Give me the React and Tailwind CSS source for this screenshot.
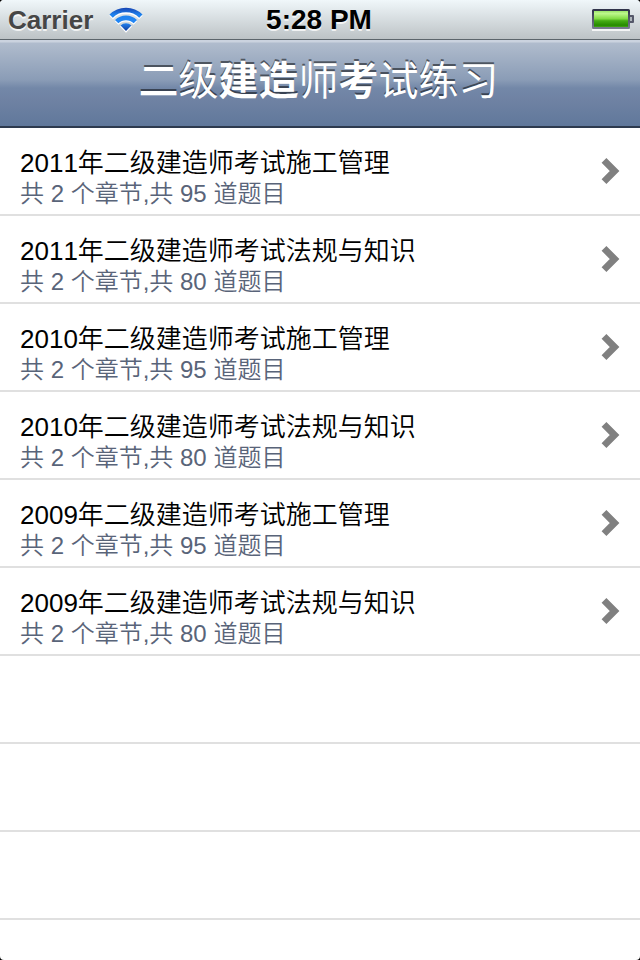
const exams = [
  { id: 1, title: '2011年二级建造师考试施工管理', chapters: 2, questions: 95 },
  { id: 2, title: '2011年二级建造师考试法规与知识', chapters: 2, questions: 80 },
  { id: 3, title: '2010年二级建造师考试施工管理', chapters: 2, questions: 95 },
  { id: 4, title: '2010年二级建造师考试法规与知识', chapters: 2, questions: 80 },
  { id: 5, title: '2009年二级建造师考试施工管理', chapters: 2, questions: 95 },
  { id: 6, title: '2009年二级建造师考试法规与知识', chapters: 2, questions: 80 },
];

function WifiIcon() {
  return (
    <svg className="ml-4 mt-1.5 h-7 w-[34px]" viewBox="0 0 34 28" fill="none">
      <defs>
        <linearGradient id="wifi" x1="0" y1="2" x2="0" y2="25" gradientUnits="userSpaceOnUse">
          <stop offset="0" stopColor="#1746b4" />
          <stop offset="0.3" stopColor="#1e83ee" />
          <stop offset="0.65" stopColor="#2487f5" />
          <stop offset="1" stopColor="#103c9c" />
        </linearGradient>
      </defs>
      <g stroke="#fff" strokeWidth="5">
        <path d="M2.15 11.4a21 21 0 0 1 29.7 0" />
        <path d="M7.67 16.9a13.2 13.2 0 0 1 18.66 0" />
      </g>
      <path d="M11 20.4a8.4 8.4 0 0 1 12 0L17 26.8z" fill="#fff" />
      <g stroke="url(#wifi)" strokeWidth="4.7">
        <path d="M2.15 10.15a21 21 0 0 1 29.7 0" />
        <path d="M7.67 15.67a13.2 13.2 0 0 1 18.66 0" />
      </g>
      <path d="M11.6 19.4a7.6 7.6 0 0 1 10.8 0L17 25z" fill="url(#wifi)" />
    </svg>
  );
}

function BatteryIcon() {
  return (
    <svg className="h-[23px] w-[43px]" viewBox="0 0 43 23">
      <defs>
        <linearGradient id="charge" x1="0" y1="0" x2="0" y2="1">
          <stop offset="0" stopColor="#8fe05c" />
          <stop offset="0.2" stopColor="#bdf78c" />
          <stop offset="0.48" stopColor="#83dc45" />
          <stop offset="0.6" stopColor="#45ac15" />
          <stop offset="0.85" stopColor="#268b00" />
          <stop offset="1" stopColor="#55b425" />
        </linearGradient>
        <linearGradient id="shell" x1="0" y1="0" x2="0" y2="1">
          <stop offset="0" stopColor="#30334a" />
          <stop offset="1" stopColor="#777a8e" />
        </linearGradient>
      </defs>
      <rect x="0" y="20" width="38" height="2" fill="#fff" fillOpacity="0.8" />
      <rect x="1" y="1" width="36" height="18" rx="0.5" fill="url(#charge)" stroke="url(#shell)" strokeWidth="2" />
      <path d="M38 7h3v6h-3" fill="#aeb5bb" stroke="#55586a" strokeWidth="2" strokeLinejoin="round" />
    </svg>
  );
}

function StatusBar() {
  return (
    <div className="grid h-10 grid-cols-[1fr_auto_1fr] border-b border-[#5d666c] bg-linear-to-b from-[#f0f7fa] to-[#bdc3c6] font-bold [text-shadow:0_2px_0_rgba(255,255,255,0.75)]">
      <div className="flex pl-2 text-[26px] leading-10 text-[#464646]">
        <span>Carrier</span>
        <WifiIcon />
      </div>
      <div className="pr-0.5 text-[28px] leading-[39px] text-black">5:28 PM</div>
      <div className="flex justify-end pr-[5px] pt-[9px]">
        <BatteryIcon />
      </div>
    </div>
  );
}

function NavBar() {
  return (
    <div className="h-22 border-b-2 border-[#2d3a4e] bg-[linear-gradient(to_bottom,#cbd3df_0,#cbd3df_2px,#b0bccd_3px,#8a9cb6_40px,#7388a8_48px,#6f82a3_60px,#60789b_86px)]">
      <h1 className="pr-[3px] text-center text-[40px] font-normal leading-[82px] text-white [text-shadow:0_-2px_0_rgba(0,0,0,0.5)]">
        <span className="font-medium">二</span>级<b>建造</b>师<b>考</b>试练习
      </h1>
    </div>
  );
}

function ExamRow({ exam }) {
  return (
    <li className="flex h-22 items-center justify-between border-b-2 border-[#e0e0e0] pl-5 pr-5">
      <div className="pt-[13px] font-[350] [font-kerning:none]">
        <p className="text-[26px] leading-8 text-black">{exam.title}</p>
        <p className="text-2xl leading-[30px] text-[#596479]">
          {`共 ${exam.chapters} 个章节,共 ${exam.questions} 道题目`}
        </p>
      </div>
      <svg className="h-7 w-[19px]" viewBox="0 0 19 28" fill="none">
        <path d="M3 3.4L13.6 14L3 24.6" stroke="#808080" strokeWidth="6.8" />
      </svg>
    </li>
  );
}

export default function App() {
  return (
    <div className="h-[960px] w-[640px] bg-black font-['Liberation_Sans','Noto_Sans_CJK_SC',sans-serif]">
      <div className="h-full overflow-hidden rounded-[4px] bg-white">
        <StatusBar />
        <NavBar />
        <ul>
          {exams.map((exam) => (
            <ExamRow key={exam.id} exam={exam} />
          ))}
          {[1, 2, 3].map((n) => (
            <li key={n} className="h-22 border-b-2 border-[#e0e0e0]" />
          ))}
        </ul>
      </div>
    </div>
  );
}
